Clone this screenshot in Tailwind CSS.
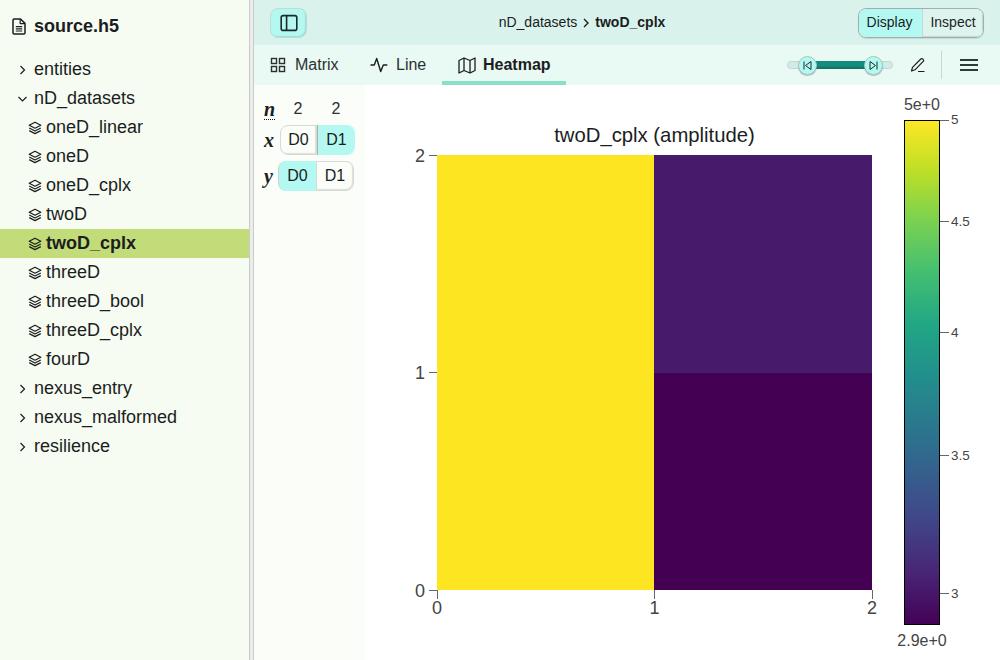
<!DOCTYPE html>
<html lang="en">
<head>
    <meta charset="UTF-8">
    <title>source.h5</title>
    <script src="https://cdn.jsdelivr.net/npm/@tailwindcss/browser@4"></script>
</head>
<body class="w-[1000px] h-[660px] overflow-hidden flex font-['Liberation_Sans',sans-serif] text-[#1b1d1e] bg-white">
    <!-- Explorer -->
    <aside class="w-[249px] h-full shrink-0 bg-[#f6fcf2]">
        <div class="h-[55px] flex items-center pl-[12px] pb-[2px] gap-[8px] font-bold text-[18px]">
            <svg class="w-[14px] h-[17px]" viewBox="0 0 14 17" fill="none" stroke="#1b1d1e" stroke-width="1.5" stroke-linejoin="round"><path d="M2.2 1h6.3L13 5.400v9.400a1.200 1.200 0 0 1-1.200 1.200H2.200A1.200 1.200 0 0 1 1 14.800V2.200A1.200 1.200 0 0 1 2.200 1z"/><path d="M8.200 1v4.600H13M3.800 8.600h6.400M3.800 10.800h6.400M3.800 13h6.400" stroke-width="1.200"/></svg>
            <span>source.h5</span>
        </div>
        <ul class="text-[18px] leading-[29px]">
            <li class="h-[29px] flex items-center pl-[18px] gap-[7px]"><svg class="w-[9px] h-[10px]" viewBox="0 0 9 10" fill="none" stroke="#1b1d1e" stroke-width="1.2"><path d="M2.5 1l4 4-4 4"/></svg>entities</li>
            <li class="h-[29px] flex items-center pl-[18px] gap-[7px]"><svg class="w-[9px] h-[10px]" viewBox="0 0 9 10" fill="none" stroke="#1b1d1e" stroke-width="1.2"><path d="M.5 3l4 4 4-4"/></svg>nD_datasets</li>
            <li class="h-[29px] flex items-center pl-[28px] gap-[4px]"><svg class="w-[14px] h-[14px]" viewBox="0 0 14 14" fill="none" stroke="#1b1d1e" stroke-width="1.2" stroke-linejoin="round"><path d="M7 1.2l5.8 3-5.8 3-5.8-3zM1.2 7l5.8 3 5.8-3M1.2 9.6l5.8 3 5.8-3"/></svg>oneD_linear</li>
            <li class="h-[29px] flex items-center pl-[28px] gap-[4px]"><svg class="w-[14px] h-[14px]" viewBox="0 0 14 14" fill="none" stroke="#1b1d1e" stroke-width="1.2" stroke-linejoin="round"><path d="M7 1.2l5.8 3-5.8 3-5.8-3zM1.2 7l5.8 3 5.8-3M1.2 9.6l5.8 3 5.8-3"/></svg>oneD</li>
            <li class="h-[29px] flex items-center pl-[28px] gap-[4px]"><svg class="w-[14px] h-[14px]" viewBox="0 0 14 14" fill="none" stroke="#1b1d1e" stroke-width="1.2" stroke-linejoin="round"><path d="M7 1.2l5.8 3-5.8 3-5.8-3zM1.2 7l5.8 3 5.8-3M1.2 9.6l5.8 3 5.8-3"/></svg>oneD_cplx</li>
            <li class="h-[29px] flex items-center pl-[28px] gap-[4px]"><svg class="w-[14px] h-[14px]" viewBox="0 0 14 14" fill="none" stroke="#1b1d1e" stroke-width="1.2" stroke-linejoin="round"><path d="M7 1.2l5.8 3-5.8 3-5.8-3zM1.2 7l5.8 3 5.8-3M1.2 9.6l5.8 3 5.8-3"/></svg>twoD</li>
            <li class="h-[29px] flex items-center pl-[28px] gap-[4px] bg-[#c1dc78] font-bold"><svg class="w-[14px] h-[14px]" viewBox="0 0 14 14" fill="none" stroke="#1b1d1e" stroke-width="1.2" stroke-linejoin="round"><path d="M7 1.2l5.8 3-5.8 3-5.8-3zM1.2 7l5.8 3 5.8-3M1.2 9.6l5.8 3 5.8-3"/></svg>twoD_cplx</li>
            <li class="h-[29px] flex items-center pl-[28px] gap-[4px]"><svg class="w-[14px] h-[14px]" viewBox="0 0 14 14" fill="none" stroke="#1b1d1e" stroke-width="1.2" stroke-linejoin="round"><path d="M7 1.2l5.8 3-5.8 3-5.8-3zM1.2 7l5.8 3 5.8-3M1.2 9.6l5.8 3 5.8-3"/></svg>threeD</li>
            <li class="h-[29px] flex items-center pl-[28px] gap-[4px]"><svg class="w-[14px] h-[14px]" viewBox="0 0 14 14" fill="none" stroke="#1b1d1e" stroke-width="1.2" stroke-linejoin="round"><path d="M7 1.2l5.8 3-5.8 3-5.8-3zM1.2 7l5.8 3 5.8-3M1.2 9.6l5.8 3 5.8-3"/></svg>threeD_bool</li>
            <li class="h-[29px] flex items-center pl-[28px] gap-[4px]"><svg class="w-[14px] h-[14px]" viewBox="0 0 14 14" fill="none" stroke="#1b1d1e" stroke-width="1.2" stroke-linejoin="round"><path d="M7 1.2l5.8 3-5.8 3-5.8-3zM1.2 7l5.8 3 5.8-3M1.2 9.6l5.8 3 5.8-3"/></svg>threeD_cplx</li>
            <li class="h-[29px] flex items-center pl-[28px] gap-[4px]"><svg class="w-[14px] h-[14px]" viewBox="0 0 14 14" fill="none" stroke="#1b1d1e" stroke-width="1.2" stroke-linejoin="round"><path d="M7 1.2l5.8 3-5.8 3-5.8-3zM1.2 7l5.8 3 5.8-3M1.2 9.6l5.8 3 5.8-3"/></svg>fourD</li>
            <li class="h-[29px] flex items-center pl-[18px] gap-[7px]"><svg class="w-[9px] h-[10px]" viewBox="0 0 9 10" fill="none" stroke="#1b1d1e" stroke-width="1.2"><path d="M2.5 1l4 4-4 4"/></svg>nexus_entry</li>
            <li class="h-[29px] flex items-center pl-[18px] gap-[7px]"><svg class="w-[9px] h-[10px]" viewBox="0 0 9 10" fill="none" stroke="#1b1d1e" stroke-width="1.2"><path d="M2.5 1l4 4-4 4"/></svg>nexus_malformed</li>
            <li class="h-[29px] flex items-center pl-[18px] gap-[7px]"><svg class="w-[9px] h-[10px]" viewBox="0 0 9 10" fill="none" stroke="#1b1d1e" stroke-width="1.2"><path d="M2.5 1l4 4-4 4"/></svg>resilience</li>
        </ul>
    </aside>
    <div class="w-[5px] h-full shrink-0 bg-[#ececec] border-x border-[#c9cdc9]"></div>

    <main class="flex-1 h-full flex flex-col min-w-0">
        <!-- Breadcrumb bar -->
        <header class="h-[45px] shrink-0 bg-[#d9f3ec] flex items-center justify-between pl-[16px] pr-[16px]">
            <button class="w-[37px] h-[30px] rounded-[8px] bg-[#b4f9f1] border border-[#bcdcd6] shadow-[inset_-1px_-1px_1px_rgba(0,0,0,0.12)] flex items-center justify-center">
                <svg class="w-[18px] h-[18px]" viewBox="0 0 18 18" fill="none" stroke="#1b2a2a" stroke-width="1.6"><rect x="1.200" y="1.600" width="15.600" height="14.800" rx="2"/><path d="M6.600 1.600v14.800"/></svg>
            </button>
            <div class="flex items-center text-[14px] ml-[-1px]">
                <span>nD_datasets</span>
                <svg class="w-[8px] h-[10px] mx-[5px]" viewBox="0 0 8 10" fill="none" stroke="#1b1d1e" stroke-width="1.4"><path d="M2 1l4 4-4 4"/></svg>
                <span class="font-bold">twoD_cplx</span>
            </div>
            <div class="flex h-[30px] w-[126px] text-[14px] rounded-[8px] border border-[#a3aeaa] overflow-hidden shadow-[0_1px_1px_rgba(0,0,0,0.1)]">
                <span class="w-[63px] flex items-center justify-center bg-[#b4f9f1] pr-[2px]">Display</span>
                <span class="flex-1 flex items-center justify-center border-l border-[#c5d8d3] bg-[#ddf3ed] shadow-[inset_-1px_-1px_1px_rgba(0,0,0,0.12)]">Inspect</span>
            </div>
        </header>

        <!-- Vis tabs -->
        <nav class="h-[40px] shrink-0 bg-[#e9f9f4] flex items-center text-[16px]">
            <div class="w-[100px] h-full flex items-center pl-[16px] gap-[9px] text-[#2b2f30]">
                <svg class="w-[16px] h-[16px]" viewBox="0 0 16 16" fill="none" stroke="#2b2f30" stroke-width="1.4"><rect x="1.500" y="1.500" width="5" height="5"/><rect x="9.500" y="1.500" width="5" height="5"/><rect x="1.500" y="9.500" width="5" height="5"/><rect x="9.500" y="9.500" width="5" height="5"/></svg>
                <span>Matrix</span>
            </div>
            <div class="w-[88px] h-full flex items-center pl-[16px] gap-[8px] text-[#2b2f30]">
                <svg class="w-[18px] h-[16px]" viewBox="0 0 18 16" fill="none" stroke="#1b1d1e" stroke-width="1.4" stroke-linejoin="round"><path d="M0.500 8h3.800l2.400-6.500 4 13 2.600-6.500h4"/></svg>
                <span>Line</span>
            </div>
            <div class="w-[124px] h-full flex items-center pl-[16px] gap-[7px] font-bold border-b-[4px] border-[#8adfc6] pt-[4px]">
                <svg class="w-[18px] h-[17px]" viewBox="0 0 18 17" fill="none" stroke="#1b1d1e" stroke-width="1.300" stroke-linejoin="round"><path d="M1 3.500l5-2.500 6 2.500 5-2.500v12.500l-5 2.500-6-2.500-5 2.500zM6 1v12.500M12 3.500V16"/></svg>
                <span>Heatmap</span>
            </div>
            <div class="ml-auto flex items-center h-full">
                <div class="relative w-[106px] h-[8px] rounded-full bg-[#d2ebe6] border border-[#c3d6d2] mr-[17px]">
                    <div class="absolute left-[20px] right-[20px] top-[-1px] h-[8px] bg-[#158d7e] shadow-[inset_0_-2px_2px_rgba(0,0,0,0.2)]"></div>
                    <div class="absolute left-[10px] top-[-6px] w-[19px] h-[19px] rounded-full bg-[#b4f9f1] border border-[#a3c9c4] shadow-[0_1px_1px_rgba(0,0,0,0.25)] flex items-center justify-center">
                        <svg class="w-[9px] h-[9px]" viewBox="0 0 9 9" fill="none" stroke="#1b2a2a" stroke-width="1"><path d="M1 .5v8M8 .5v8L2.500 4.500z"/></svg>
                    </div>
                    <div class="absolute left-[76px] top-[-6px] w-[19px] h-[19px] rounded-full bg-[#b4f9f1] border border-[#a3c9c4] shadow-[0_1px_1px_rgba(0,0,0,0.25)] flex items-center justify-center">
                        <svg class="w-[9px] h-[9px]" viewBox="0 0 9 9" fill="none" stroke="#1b2a2a" stroke-width="1"><path d="M8 .5v8M1 .5v8l5.500-4z"/></svg>
                    </div>
                </div>
                <svg class="w-[16px] h-[16px]" viewBox="0 0 16 16" fill="none" stroke="#1b1d1e" stroke-width="1.200" stroke-linejoin="round"><path d="M1.500 14l1-3.600L10.800 2a1.300 1.300 0 0 1 2 0l.4.4a1.300 1.300 0 0 1 0 2L5 12.800zM8 14.500h6.500"/></svg>
                <div class="w-px h-[28px] bg-[#c5d8d3] ml-[15px] mr-[18px]"></div>
                <svg class="w-[18px] h-[14px] mr-[22px]" viewBox="0 0 18 14" fill="none" stroke="#2b3a38" stroke-width="1.800"><path d="M0 2h18M0 7h18M0 12h18"/></svg>
            </div>
        </nav>

        <div class="flex-1 flex min-h-0">
            <!-- Dimension mapper -->
            <section class="w-[111px] shrink-0 bg-[#fafdf8] pt-[11px] pl-[10px] text-[16px]">
                <div class="h-[26px] flex items-center">
                    <span class="w-[11px] text-center font-['Liberation_Serif',serif] font-bold italic text-[20px] leading-[20px] border-b border-dotted border-[#1b1d1e]">n</span>
                    <span class="w-[38px] ml-[4px] text-center text-[#2b2f30]">2</span>
                    <span class="w-[38px] text-center text-[#2b2f30]">2</span>
                </div>
                <div class="h-[36px] flex items-center">
                    <span class="w-[16px] font-['Liberation_Serif',serif] font-bold italic text-[20px]">x</span>
                    <div class="flex h-[30px] w-[75px]">
                        <span class="w-[37px] flex items-center justify-center bg-[#fafdf8] rounded-l-[8px] border border-[#d5dad7] shadow-[inset_-1px_-1px_1px_rgba(0,0,0,0.12)]">D0</span>
                        <span class="flex-1 flex items-center justify-center bg-[#b4f9f1] rounded-r-[8px] border-l border-[#a9b5b1]">D1</span>
                    </div>
                </div>
                <div class="h-[36px] flex items-center">
                    <span class="w-[14px] font-['Liberation_Serif',serif] font-bold italic text-[20px]">y</span>
                    <div class="flex h-[30px] w-[76px]">
                        <span class="w-[38px] flex items-center justify-center bg-[#b4f9f1] rounded-l-[8px] border-l border-[#c4d5d1]">D0</span>
                        <span class="flex-1 flex items-center justify-center bg-[#fafdf8] rounded-r-[8px] border border-[#d5dad7] shadow-[inset_-1px_-1px_1px_rgba(0,0,0,0.12)]">D1</span>
                    </div>
                </div>
            </section>

            <!-- Heatmap: chart coordinates are relative to the page -->
            <svg class="w-[635px] h-[575px] bg-white" viewBox="365 85 635 575" font-family="Liberation Sans, sans-serif">
                <defs>
                    <linearGradient id="viridis" x1="0" y1="1" x2="0" y2="0">
                        <stop offset="0" stop-color="#440154"/>
                        <stop offset="0.1" stop-color="#482475"/>
                        <stop offset="0.2" stop-color="#414487"/>
                        <stop offset="0.3" stop-color="#355f8d"/>
                        <stop offset="0.4" stop-color="#2a788e"/>
                        <stop offset="0.5" stop-color="#21918c"/>
                        <stop offset="0.6" stop-color="#22a884"/>
                        <stop offset="0.7" stop-color="#44bf70"/>
                        <stop offset="0.8" stop-color="#7ad151"/>
                        <stop offset="0.9" stop-color="#bddf26"/>
                        <stop offset="1" stop-color="#fde725"/>
                    </linearGradient>
                </defs>
                <text x="654.500" y="142" text-anchor="middle" font-size="20.300" fill="#1b1d1e">twoD_cplx (amplitude)</text>

                <g shape-rendering="crispEdges">
                    <rect x="437" y="155" width="217" height="435" fill="#fde621"/>
                    <rect x="654" y="155" width="218" height="218" fill="#481a6c"/>
                    <rect x="654" y="373" width="218" height="217" fill="#440154"/>
                </g>

                <g stroke="#666" stroke-width="1" shape-rendering="crispEdges">
                    <path d="M429 155h8M429 372.500h8M429 590h8M437 590v9M654.500 590v9M872 590v9"/>
                </g>
                <g font-size="18" fill="#444" text-anchor="end">
                    <text x="425" y="162">2</text>
                    <text x="425" y="379">1</text>
                    <text x="425" y="597">0</text>
                </g>
                <g font-size="18" fill="#444" text-anchor="middle">
                    <text x="437" y="614">0</text>
                    <text x="654.500" y="614">1</text>
                    <text x="872" y="614">2</text>
                </g>

                <rect x="904.500" y="120.500" width="35" height="504" fill="url(#viridis)" stroke="#000" stroke-width="1"/>
                <g stroke="#666" stroke-width="1" shape-rendering="crispEdges">
                    <path d="M940 120h9M940 221h9M940 332h9M940 455h9M940 593h9"/>
                </g>
                <g font-size="13.500" fill="#444">
                    <text x="951" y="124">5</text>
                    <text x="951" y="226">4.5</text>
                    <text x="951" y="337">4</text>
                    <text x="951" y="460">3.5</text>
                    <text x="951" y="598">3</text>
                </g>
                <g font-size="16" fill="#444" text-anchor="middle">
                    <text x="922" y="110">5e+0</text>
                    <text x="922" y="646">2.9e+0</text>
                </g>
            </svg>
        </div>
    </main>
</body>
</html>
